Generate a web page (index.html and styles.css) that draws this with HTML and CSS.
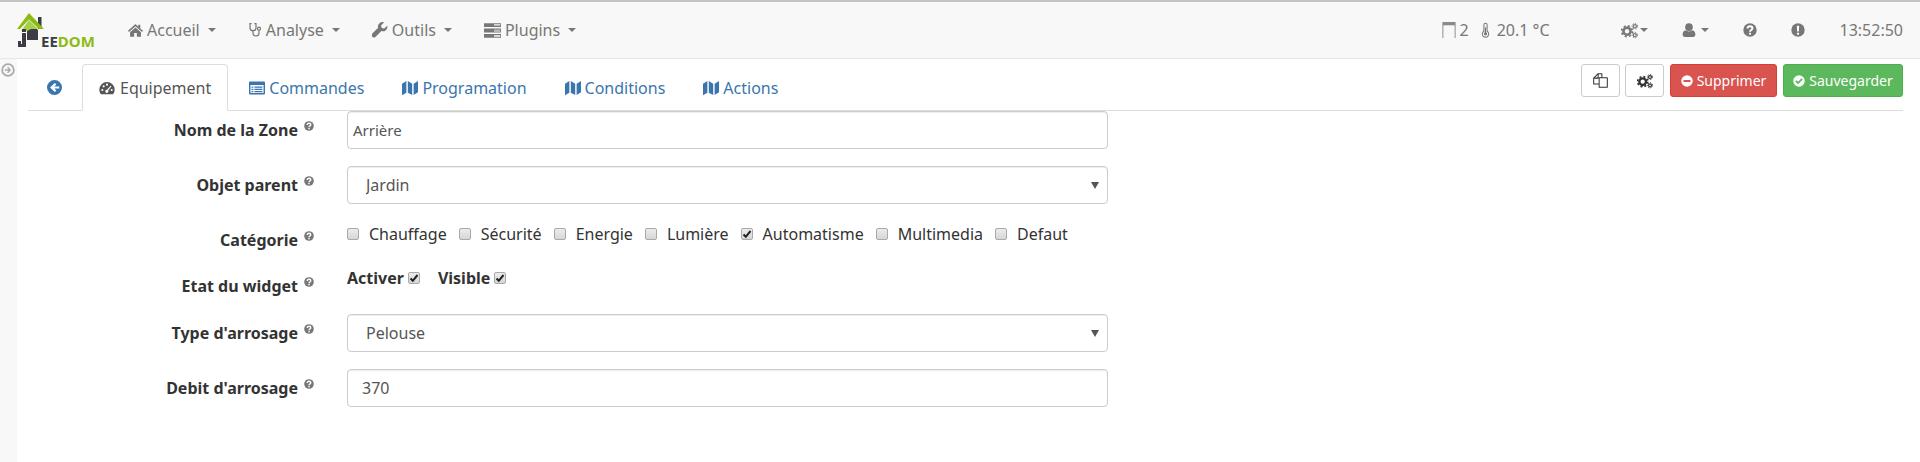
FILE: index.html
```html
<!DOCTYPE html>
<html lang="fr">
<head>
    <meta charset="UTF-8">
    <title>Jeedom - Arrosage</title>
    <link rel="stylesheet" href="styles.css">
</head>
<body>
    <svg class="defs" width="0" height="0">
        <symbol id="i-home" viewBox="1 3 22 19"><path d="M12 3 1 13l1.400 1.600L12 6.300l9.600 8.300L23 13l-4-3.500V4h-3v2.900zM12 8.200 4 15v6.500h6V16h4v5.500h6V15z"/></symbol>
        <symbol id="i-steth" viewBox="3 2 18 21"><path fill="none" stroke="currentColor" stroke-width="1.800" d="M7 3H4.500v6a4.500 4.500 0 0 0 9 0V3H11M9 13.500V17a4.500 4.500 0 0 0 9 0v-4"/><circle cx="18" cy="10.500" r="2.300" fill="none" stroke="currentColor" stroke-width="1.800"/></symbol>
        <symbol id="i-wrench" viewBox="1 1 23 23"><path d="m23 6.500-4.500 4-3.500-1-1-3.500 4.500-4.500a6.500 6.500 0 0 0-8.700 7.800L1.500 17.500a3.300 3.300 0 0 0 4.800 4.800l8.200-8.300A6.500 6.500 0 0 0 23 6.500z"/></symbol>
        <symbol id="i-server" viewBox="1 2 22 21"><path d="M1 3h22v5H1zM1 10h22v5H1zM1 17h22v5H1z"/><path fill="#f8f8f8" d="M14 4.500h8v1h-8zM14 6h8v.8h-8zM14 11.500h8v1h-8zM14 13h8v.8h-8zM14 18.500h8v1h-8zM14 20h8v.8h-8z"/></symbol>
        <symbol id="i-tacho" viewBox="0 2 24 20"><path d="M12 3A11.500 11.500 0 0 0 .5 14.500c0 2.800 1 5 2.500 6.800h18c1.500-1.800 2.500-4 2.500-6.800A11.500 11.500 0 0 0 12 3z"/><g fill="#fff"><circle cx="5" cy="15" r="1.600"/><circle cx="7" cy="9.500" r="1.600"/><circle cx="12" cy="7" r="1.600"/><circle cx="19" cy="15" r="1.600"/><path d="m17.500 8.500 1.200.8-5 6.500a2.300 2.300 0 1 1-1.700-1z"/></g></symbol>
        <symbol id="i-list" viewBox="1 3 22 18"><path fill-rule="evenodd" d="M2.500 3h19A1.500 1.500 0 0 1 23 4.500v15a1.500 1.500 0 0 1-1.500 1.500h-19A1.500 1.500 0 0 1 1 19.500v-15A1.500 1.500 0 0 1 2.500 3zM3 8v11h18V8z"/><path d="M4.500 10h2.500v1.700H4.500zM8.500 10h11v1.700h-11zM4.500 13h2.500v1.700H4.500zM8.500 13h11v1.700h-11zM4.500 16h2.500v1.700H4.500zM8.500 16h11v1.700h-11z"/></symbol>
        <symbol id="i-map" viewBox="1 2 22 20"><path d="M1 6l6-3.500v16L1 22zM9 2.500l6 3.500v15.500l-6-3zM17 6l6-3.500V18l-6 3.500z"/></symbol>
        <symbol id="i-back" viewBox="1 1 22 22"><path fill-rule="evenodd" d="M12 1a11 11 0 1 0 0 22 11 11 0 0 0 0-22zM12.500 5.500l2.200 2.200-2.800 2.800H19v3h-7.100l2.800 2.800-2.200 2.200L5.500 12z"/></symbol>
        <symbol id="i-gears" viewBox="0 0 24 24"><circle cx="8.500" cy="13" r="5" fill="none" stroke="currentColor" stroke-width="3.600"/><circle cx="8.500" cy="13" r="7.600" fill="none" stroke="currentColor" stroke-width="2.400" stroke-dasharray="3 3"/><circle cx="19.500" cy="6" r="2.200" fill="none" stroke="currentColor" stroke-width="1.800"/><circle cx="19.500" cy="6" r="3.900" fill="none" stroke="currentColor" stroke-width="1.400" stroke-dasharray="1.800 1.800"/><circle cx="19.500" cy="18.500" r="2.200" fill="none" stroke="currentColor" stroke-width="1.800"/><circle cx="19.500" cy="18.500" r="3.900" fill="none" stroke="currentColor" stroke-width="1.400" stroke-dasharray="1.800 1.800"/></symbol>
        <symbol id="i-user" viewBox="2 1 20 22"><circle cx="12" cy="7.500" r="6"/><path d="M7 12.500c1.300 1.200 3 1.800 5 1.800s3.700-.6 5-1.800c3 .3 5 2.600 5 6.500 0 2.300-1.500 4-3.500 4h-13C3.500 23 2 21.300 2 19c0-3.900 2-6.200 5-6.500z"/></symbol>
        <symbol id="i-help" viewBox="0 0 24 24"><circle cx="12" cy="12" r="11.500"/><path fill="none" stroke="#fff" stroke-width="3.400" d="M7.800 9.500c0-2.600 1.900-4 4.200-4s4.200 1.500 4.200 3.600c0 3-4.200 3-4.200 6"/><path fill="#fff" d="M10.200 16.800h3.600v3.200h-3.600z"/></symbol>
        <symbol id="i-alert" viewBox="0 0 24 24"><circle cx="12" cy="12" r="11.500"/><path fill="#fff" d="M10 4.500h4l-.5 10h-3zM10.200 16.500h3.600v3.500h-3.600z"/></symbol>
        <symbol id="i-minus" viewBox="0 0 24 24"><path fill-rule="evenodd" d="M12 .5a11.500 11.500 0 1 0 0 23 11.500 11.500 0 0 0 0-23zM5 10h14v4H5z"/></symbol>
        <symbol id="i-check" viewBox="0 0 24 24"><path fill-rule="evenodd" d="M12 .5a11.500 11.500 0 1 0 0 23 11.500 11.500 0 0 0 0-23zm-1.800 18L4.500 12.800 7 10.300l3.200 3.200L17 6.700l2.500 2.500z"/></symbol>
        <symbol id="i-copy" viewBox="1 1 22 22"><path fill="none" stroke="currentColor" stroke-width="1.500" stroke-linejoin="round" d="M10 17H2V8.500L8.500 2H14v6M8.500 2v6.500H2M10 8h6l6 0v14H10z"/></symbol>
        <symbol id="i-thermo" viewBox="0 0 14 24"><path fill="none" stroke="currentColor" stroke-width="1.600" d="M4.500 14V4a2.500 2.500 0 0 1 5 0v10a5 5 0 1 1-5 0z"/><circle cx="7" cy="18" r="2.500"/><path d="M6 8h2v9H6z"/></symbol>
        <symbol id="i-window" viewBox="0 0 14 17"><path d="M0 0h14v3.500H0z"/><path d="M0 3h1v14H0zM13 3h1v14h-1z"/></symbol>
    </svg>

    <nav class="navbar">
        <a class="logo">
            <svg width="80" height="38" viewBox="0 0 80 38">
                <path fill="#3c3c44" d="M21 4h3.500v12H21z"/>
                <path fill="#3c3c44" d="M12 9l9 8v10H10V11z"/>
                <path fill="#a4d049" d="M12 7l9 9H14l-4 2H4z"/>
                <path fill="#8dbb12" d="M12 0 27 16h-5L12 6.500 3 16H0z"/>
                <path fill="#3c3c44" d="M5 16h4v3H5zM5 20h4v14H1v-6h3v3h1z"/>
                <text x="24" y="34" class="logo-text">EE<tspan fill="#8dbb12">DOM</tspan></text>
            </svg>
        </a>
        <ul class="nav-menu">
            <li><svg class="ico ico-15"><use href="#i-home"/></svg>Accueil<span class="caret"></span></li>
            <li><svg class="ico ico-14"><use href="#i-steth"/></svg>Analyse<span class="caret"></span></li>
            <li><svg class="ico ico-16"><use href="#i-wrench"/></svg>Outils<span class="caret"></span></li>
            <li><svg class="ico ico-17"><use href="#i-server"/></svg>Plugins<span class="caret"></span></li>
        </ul>
        <div class="nav-right">
            <span class="stat stat-window"><svg class="ico window"><use href="#i-window"/></svg>2</span>
            <span class="stat stat-temp"><svg class="ico thermo"><use href="#i-thermo"/></svg>20.1 °C</span>
            <span class="tool tool-gears"><svg class="ico ico-17"><use href="#i-gears"/></svg><span class="caret caret-tight"></span></span>
            <span class="tool tool-user"><svg class="ico ico-14"><use href="#i-user"/></svg><span class="caret"></span></span>
            <span class="tool tool-help"><svg class="ico ico-14"><use href="#i-help"/></svg></span>
            <span class="tool tool-alert"><svg class="ico ico-14"><use href="#i-alert"/></svg></span>
            <span class="clock">13:52:50</span>
        </div>
    </nav>

    <div class="page">
        <aside class="sidebar">
            <svg class="side-arrow" viewBox="0 0 24 24"><circle cx="12" cy="12" r="10" fill="none" stroke="currentColor" stroke-width="3"/><path fill="currentColor" d="M12 6.500 17.500 12 12 17.500l-1.600-1.600 2.700-2.700H6.500v-2.400h6.600L10.400 8.100z"/></svg>
        </aside>
        <main class="content">
            <div class="tabs-bar">
                <ul class="tabs">
                    <li class="tab tab-back"><svg class="ico ico-15"><use href="#i-back"/></svg></li>
                    <li class="tab active"><svg class="ico ico-16"><use href="#i-tacho"/></svg>Equipement</li>
                    <li class="tab"><svg class="ico ico-16"><use href="#i-list"/></svg>Commandes</li>
                    <li class="tab"><svg class="ico ico-16"><use href="#i-map"/></svg>Programation</li>
                    <li class="tab"><svg class="ico ico-16"><use href="#i-map"/></svg>Conditions</li>
                    <li class="tab"><svg class="ico ico-16"><use href="#i-map"/></svg>Actions</li>
                </ul>
                <div class="actions">
                    <button class="btn btn-icon"><svg class="ico ico-15"><use href="#i-copy"/></svg></button>
                    <button class="btn btn-icon"><svg class="ico ico-16"><use href="#i-gears"/></svg></button>
                    <button class="btn btn-danger"><svg class="ico ico-12"><use href="#i-minus"/></svg>Supprimer</button>
                    <button class="btn btn-success"><svg class="ico ico-12"><use href="#i-check"/></svg>Sauvegarder</button>
                </div>
            </div>

            <form class="form">
                <div class="row">
                    <label class="row-label">Nom de la Zone<svg class="help"><use href="#i-help"/></svg></label>
                    <input class="field field-small" type="text" value="Arrière">
                </div>
                <div class="row">
                    <label class="row-label">Objet parent<svg class="help"><use href="#i-help"/></svg></label>
                    <select class="field field-select"><option>Jardin</option></select>
                </div>
                <div class="row row-cats">
                    <label class="row-label">Catégorie<svg class="help"><use href="#i-help"/></svg></label>
                    <div class="cats">
                        <label class="cat"><input type="checkbox">Chauffage</label>
                        <label class="cat"><input type="checkbox">Sécurité</label>
                        <label class="cat"><input type="checkbox">Energie</label>
                        <label class="cat"><input type="checkbox">Lumière</label>
                        <label class="cat"><input type="checkbox" checked>Automatisme</label>
                        <label class="cat"><input type="checkbox">Multimedia</label>
                        <label class="cat"><input type="checkbox">Defaut</label>
                    </div>
                </div>
                <div class="row row-state">
                    <label class="row-label">Etat du widget<svg class="help"><use href="#i-help"/></svg></label>
                    <div class="states">
                        <label class="state">Activer<input type="checkbox" checked></label>
                        <label class="state">Visible<input type="checkbox" checked></label>
                    </div>
                </div>
                <div class="row">
                    <label class="row-label">Type d'arrosage<svg class="help"><use href="#i-help"/></svg></label>
                    <select class="field field-select"><option>Pelouse</option></select>
                </div>
                <div class="row">
                    <label class="row-label">Debit d'arrosage<svg class="help"><use href="#i-help"/></svg></label>
                    <input class="field" type="text" value="370">
                </div>
            </form>
        </main>
    </div>
</body>
</html>
```

FILE: styles.css
```css
* {
    box-sizing: border-box;
}

html, body {
    height: 100%;
}

body {
    margin: 0;
    font-family: "Noto Sans", "Open Sans", sans-serif;
    font-size: 16px;
    line-height: 20px;
    color: #333;
    background: #fff;
    overflow: hidden;
}

ul {
    list-style: none;
    margin: 0;
    padding: 0;
}

.defs {
    position: absolute;
}

.ico {
    display: block;
    flex: none;
    fill: currentColor;
}

.ico-12 { width: 12px; height: 12px; }
.ico-14 { width: 14px; height: 14px; }
.ico-15 { width: 15px; height: 15px; }
.ico-16 { width: 16px; height: 16px; }
.ico-17 { width: 17px; height: 17px; }

.caret {
    display: block;
    margin-left: 8px;
    border-top: 4px solid;
    border-left: 4px solid transparent;
    border-right: 4px solid transparent;
}

.caret-tight {
    margin-left: 2px;
}

/* top bar */
.navbar {
    display: flex;
    align-items: center;
    height: 59px;
    padding-left: 17px;
    color: #777;
    background: #f8f8f8;
    border-top: 2px solid #c4c4c4;
    border-bottom: 1px solid #e7e7e7;
}

.logo {
    display: block;
    align-self: flex-start;
    width: 111px;
    height: 38px;
    margin-top: 11px;
}

.logo-text {
    font-size: 15px;
    font-weight: 700;
    fill: #3c3c44;
}

.nav-menu {
    display: flex;
    gap: 32px;
}

.nav-menu li {
    display: flex;
    align-items: center;
    gap: 4px;
}

.nav-menu .caret {
    margin-left: 4px;
}

.nav-right {
    display: flex;
    align-items: center;
    margin-left: auto;
    padding-right: 17px;
}

.stat, .tool {
    display: flex;
    align-items: center;
}

.window {
    width: 14px;
    height: 16px;
    margin-right: 3px;
    color: #8a8a8a;
}

.thermo {
    width: 9px;
    height: 16px;
    margin-right: 7px;
}

.stat-temp { margin-left: 12px; }
.tool-gears { margin-left: 71px; }
.tool-user { margin-left: 34px; }
.tool-user .caret { margin-left: 5px; }
.tool-help { margin-left: 34px; }
.tool-alert { margin-left: 34px; }

.clock {
    margin-left: 35px;
}

/* page */
.page {
    display: flex;
    height: calc(100% - 59px);
}

.sidebar {
    flex: none;
    width: 17px;
    padding: 4px 0 0 1px;
    background: #f8f8f8;
}

.side-arrow {
    display: block;
    width: 14px;
    height: 14px;
    color: #aaa;
}

.content {
    flex: 1;
    padding: 5px 17px 0 11px;
}

.tabs-bar {
    display: flex;
    justify-content: space-between;
    height: 47px;
    border-bottom: 1px solid #ddd;
}

.tabs {
    display: flex;
}

.tab {
    display: flex;
    align-items: center;
    gap: 4px;
    height: 47px;
    padding: 0 16px 0 20px;
    color: #3a76ad;
    border: 1px solid transparent;
    border-radius: 4px 4px 0 0;
}

.tab-back {
    padding: 0 19px 0 18px;
}

.tab.active {
    gap: 5px;
    color: #555;
    background: #fff;
    border-color: #ddd #ddd #fff;
    padding: 0 16px;
}

.actions {
    display: flex;
    align-items: flex-start;
    gap: 6px;
}

.btn {
    display: flex;
    align-items: center;
    justify-content: center;
    gap: 4px;
    height: 33px;
    padding: 0;
    font: inherit;
    font-size: 14px;
    color: #333;
    background: #fff;
    border: 1px solid #ccc;
    border-radius: 3px;
}

.btn-icon {
    width: 39px;
    margin-right: -1px;
}

.btn-danger {
    color: #fff;
    background: #d9534f;
    border-color: #d43f3a;
    width: 107px;
    margin-left: 1px;
}

.btn-success {
    color: #fff;
    background: #5cb85c;
    border-color: #4cae4c;
    width: 120px;
}

/* form */
.form {
    width: 1080px;
}

.row {
    display: grid;
    grid-template-columns: 319px 1fr;
    margin-bottom: 17px;
}

.row-label {
    display: flex;
    justify-content: flex-end;
    padding: 9px 33px 0 0;
    font-weight: 700;
}

.help {
    width: 10px;
    height: 10px;
    margin: 1px 0 0 6px;
    fill: #777;
}

.field {
    width: 100%;
    height: 38px;
    padding: 0 14px;
    font: inherit;
    color: #555;
    background: #fff;
    border: 1px solid #ccc;
    border-radius: 4px;
    box-shadow: inset 0 1px 1px rgba(0, 0, 0, .075);
}

.field-small {
    padding: 0 5px;
    font-size: 15px;
}

.field-select {
    appearance: none;
    padding-left: 18px;
    background: #fff url("data:image/svg+xml,%3Csvg xmlns='http://www.w3.org/2000/svg' width='8' height='7'%3E%3Cpath fill='%23555' d='M0 0h8L4 7z'/%3E%3C/svg%3E") no-repeat right 8px center;
}

.row-cats {
    height: 38px;
    margin-bottom: 9px;
}

.cats {
    display: flex;
    gap: 12px;
    padding-top: 3px;
}

.cat {
    display: flex;
    align-items: center;
    height: 20px;
    gap: 10px;
}

.row-state {
    height: 29px;
}

.row-state .row-label {
    padding-top: 8px;
}

.states {
    display: flex;
    gap: 18px;
}

.state {
    display: flex;
    align-items: center;
    gap: 4px;
    height: 20px;
    font-weight: 700;
}

.state input {
    margin-top: 8px;
}

input[type="checkbox"] {
    appearance: none;
    flex: none;
    width: 12px;
    height: 12px;
    margin: 0;
    background: linear-gradient(#ececec, #d6d6d6);
    border: 1px solid #a9a9a9;
    border-radius: 2px;
}

input[type="checkbox"]:checked {
    background: url("data:image/svg+xml,%3Csvg xmlns='http://www.w3.org/2000/svg' width='10' height='10'%3E%3Cpath fill='none' stroke='%23222' stroke-width='2' d='M1.500 5.500l2.300 2.300L8.500 2'/%3E%3C/svg%3E") center no-repeat, linear-gradient(#ececec, #d6d6d6);
}
```
